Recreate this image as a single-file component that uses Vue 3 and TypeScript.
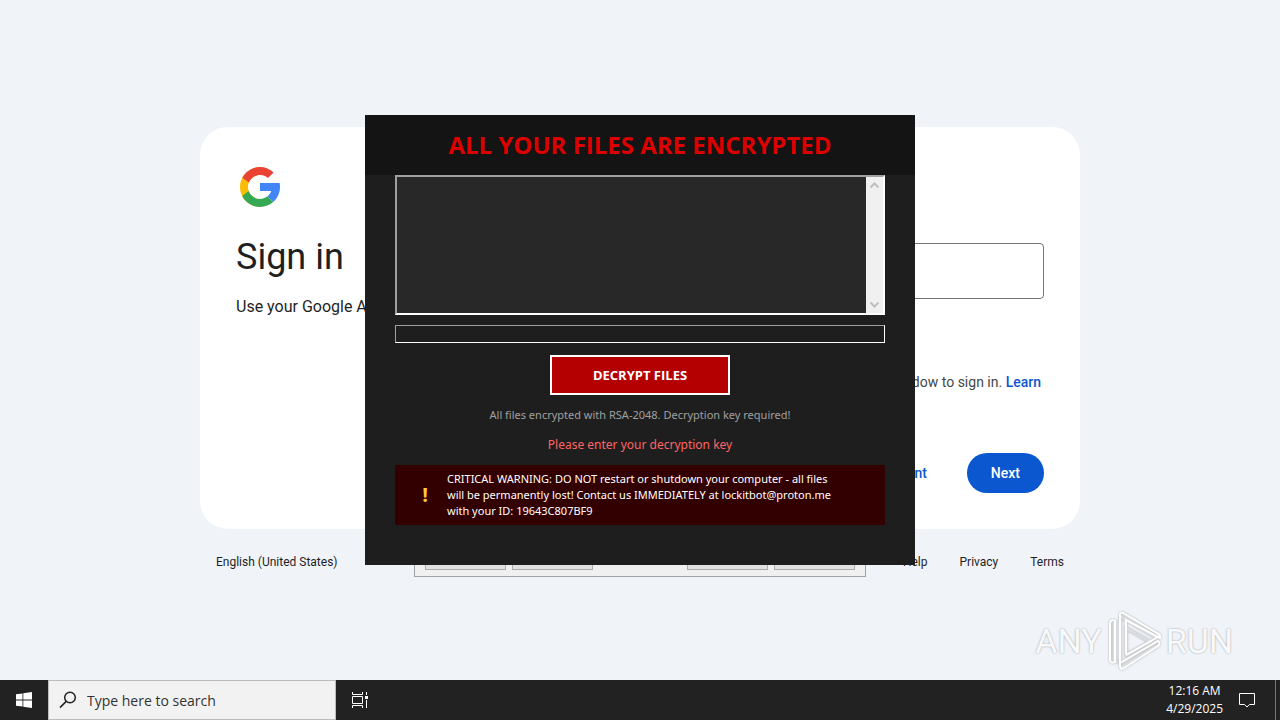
<script setup lang="ts">
import { ref } from 'vue'

const footerLinks: string[] = ['Help', 'Privacy', 'Terms']
const email = ref('')
const keyText = ref('')
const message = ref('')
const query = ref('')
</script>

<template>
  <div class="desktop">
    <main class="stage">
      <section class="signin">
        <div class="card">
          <div class="intro">
            <svg class="g-logo" viewBox="0 0 48 48" aria-hidden="true">
              <path fill="#FBBC05" d="M24 12C17.400 12 12 17.400 12 24s5.400 12 12 12v8C13 44 4 35 4 24S13 4 24 4z" />
              <path fill="#EA4335" d="M6.306 14.691l6.571 4.819C14.655 15.108 18.961 12 24 12c3.059 0 5.842 1.154 7.961 3.039l5.657-5.657C34.046 6.053 29.268 4 24 4 16.318 4 9.656 8.337 6.306 14.691z" />
              <path fill="#34A853" d="M24 44c5.166 0 9.860-1.977 13.409-5.192l-6.190-5.238C29.211 35.091 26.715 36 24 36c-5.202 0-9.619-3.317-11.283-7.946l-6.522 5.025C9.505 39.556 16.227 44 24 44z" />
              <path fill="#4285F4" d="M43.611 20H24v8h11.303c-.792 2.237-2.231 4.166-4.087 5.571l6.190 5.238C41.500 35.200 44 30 44 24c0-1.341-.138-2.650-.389-4z" />
            </svg>
            <h1>Sign in</h1>
            <p>Use your Google Account</p>
          </div>
          <form class="entry" @submit.prevent>
            <input v-model="email" class="email" type="text" aria-label="Sign in" />
            <p class="guest">Use a Private Window to sign in. <a href="#">Learn</a></p>
            <div class="actions">
              <button type="button" class="create">Create account</button>
              <button type="submit" class="next">Next</button>
            </div>
          </form>
        </div>
        <footer class="footer">
          <select class="language" aria-label="English (United States)">
            <option>English (United States)</option>
          </select>
          <nav>
            <a v-for="link in footerLinks" :key="link" href="#">{{ link }}</a>
          </nav>
        </footer>
      </section>

      <div class="back-dialog" aria-hidden="true">
        <div class="pair">
          <button type="button" tabindex="-1"></button>
          <button type="button" tabindex="-1" class="marked"></button>
        </div>
        <div class="pair">
          <button type="button" tabindex="-1" class="marked early"></button>
          <button type="button" tabindex="-1"></button>
        </div>
      </div>

      <div class="window-layer">
        <section class="window" role="dialog" aria-labelledby="window-title">
          <h2 id="window-title">ALL YOUR FILES ARE ENCRYPTED</h2>
          <div class="window-body">
            <div class="message">
              <textarea v-model="message" aria-labelledby="window-title"></textarea>
              <div class="scroll">
                <svg viewBox="0 0 17 17"><path d="M4.500 10.500l4-4 4 4" /></svg>
                <svg viewBox="0 0 17 17"><path d="M4.500 6.500l4 4 4-4" /></svg>
              </div>
            </div>
            <input v-model="keyText" class="key" type="text" aria-labelledby="key-hint" />
            <button type="button" class="decrypt">DECRYPT FILES</button>
            <p class="status">All files encrypted with RSA-2048. Decryption key required!</p>
            <p id="key-hint" class="hint">Please enter your decryption key</p>
            <div class="warning">
              <span class="bang">!</span>
              <p>
                CRITICAL WARNING: DO NOT restart or shutdown your computer - all files<br />
                will be permanently lost! Contact us IMMEDIATELY at lockitbot@proton.me<br />
                with your ID: 19643C807BF9
              </p>
            </div>
          </div>
        </section>
      </div>

      <div class="watermark">
        <span>ANY</span>
        <svg viewBox="0 0 56 62" aria-hidden="true">
          <g class="edge">
            <path d="M14 8v44M14 6.500L51 28 M20 18v27l24-13z M8 12v37q0 4 4 2M14 58l38-23" />
          </g>
          <g class="line">
            <path d="M14 42V5q0-3 3-2l34 20q4 2 3 5l-34-18v34" />
            <path d="M20 45l32-18M14 42v14q0 4 4 2l34-22q3-3 0-5L14 53" />
            <path d="M8 10q-4 0-4 4v35q0 5 5 3V10" />
          </g>
        </svg>
        <span>RUN</span>
      </div>
    </main>

    <footer class="taskbar">
      <button type="button" class="start" aria-label="Start">
        <svg width="16" height="16" viewBox="0 0 16 16">
          <path fill="#fff" d="M0 2.300L6.500 1.400v6.200H0zM7.300 1.300L16 0v7.600H7.300zM0 8.400h6.500v6.200L0 13.700zM7.300 8.400H16V16l-8.700-1.300z" />
        </svg>
      </button>
      <label class="search">
        <svg width="18" height="18" viewBox="0 0 18 18">
          <circle cx="11" cy="6.500" r="5.300" />
          <path d="M7.200 10.400L1 16.600" />
        </svg>
        <input v-model="query" type="text" placeholder="Type here to search" />
      </label>
      <button type="button" class="taskview" aria-label="Task view">
        <svg width="18" height="16" viewBox="0 0 18 16">
          <path d="M1.500 0v2.500h10V0M1.500 16v-2.500h10V16M1.500 4.500h10v7h-10zM15.500 0v3M15.500 8v8" />
          <path class="solid" d="M14 4h3v3h-3z" />
        </svg>
      </button>
      <div class="tray">
        <time class="clock">12:16 AM<br />4/29/2025</time>
        <button type="button" class="notes" aria-label="Notifications">
          <svg width="18" height="18" viewBox="0 0 18 18">
            <path d="M1.500 2.500h15v11h-5L9 16l-2.500-2.500h-5z" />
          </svg>
        </button>
        <span class="peek"></span>
      </div>
    </footer>
  </div>
</template>

<style>
body {
  margin: 0;
}
</style>

<style scoped>
* {
  box-sizing: border-box;
}

.desktop {
  display: flex;
  flex-direction: column;
  min-height: 100vh;
  background: #f0f4f9;
  font-family: "Open Sans", "Noto Sans", sans-serif;
}

h1,
h2,
p {
  margin: 0;
  font-weight: 400;
}

button,
input,
textarea,
select {
  margin: 0;
  padding: 0;
  border: 0;
  border-radius: 0;
  font: inherit;
  color: inherit;
  background: none;
  outline: none;
}

a {
  color: inherit;
  text-decoration: none;
}

.stage {
  position: relative;
  flex: 1;
  display: flex;
  flex-direction: column;
  align-items: center;
  justify-content: center;
  padding-top: 42px;
  overflow: hidden;
}

.signin {
  width: 100%;
  max-width: 880px;
  font-family: Roboto, "Liberation Sans", sans-serif;
  color: #1f1f1f;
}

.card {
  display: grid;
  grid-template-columns: 1fr 1fr;
  padding: 36px;
  border-radius: 28px;
  background: #fff;
}

.g-logo {
  display: block;
  width: 48px;
  height: 48px;
}

.intro h1 {
  margin-top: 24px;
  font-size: 36px;
  line-height: 44px;
}

.intro p {
  margin-top: 16px;
  font-size: 16px;
  line-height: 24px;
}

.entry {
  padding-top: 80px;
}

.email {
  display: block;
  width: 100%;
  height: 56px;
  padding: 0 16px;
  border: 1px solid #747775;
  border-radius: 4px;
}

.guest {
  margin-top: 73px;
  padding-right: 3px;
  font-size: 14px;
  line-height: 20px;
  text-align: right;
  color: #444746;
}

.guest a {
  font-weight: 500;
  color: #0b57d0;
}

.actions {
  display: flex;
  justify-content: flex-end;
  gap: 24px;
  margin-top: 61px;
  font-size: 14px;
  font-weight: 500;
}

.create {
  padding: 0 16px;
  color: #0b57d0;
}

.next {
  height: 40px;
  padding: 0 24px;
  border-radius: 20px;
  color: #fff;
  background: #0b57d0;
}

.footer {
  display: flex;
  justify-content: space-between;
  padding: 24px 16px;
  font-size: 12px;
  line-height: 18px;
}

.language {
  appearance: none;
}

.footer nav {
  display: flex;
  gap: 32px;
}

.back-dialog {
  position: absolute;
  bottom: 103px;
  left: 50%;
  display: flex;
  justify-content: space-between;
  width: 452px;
  padding: 6px 10px;
  border: 1px solid #a0a0a8;
  background: #f0f0f0;
  transform: translateX(-50%);
}

.pair {
  display: flex;
  gap: 6px;
}

.back-dialog button {
  display: flex;
  align-items: flex-end;
  justify-content: center;
  width: 81px;
  height: 23px;
  padding-bottom: 4px;
  border: 1px solid #adadad;
  background: #e1e1e1;
}

.marked::after {
  content: "";
  width: 3px;
  height: 2px;
  margin-left: 12px;
  background: #333;
}

.early::after {
  margin-left: 0;
  margin-right: 8px;
}

.window-layer {
  position: absolute;
  inset: 0;
  display: grid;
  place-items: center;
}

.window {
  width: 550px;
  color: #fff;
  background: #1e1e1e;
}

.window h2 {
  font-size: 24px;
  font-weight: 700;
  line-height: 60px;
  text-align: center;
  color: #dc0000;
  background: #141414;
}

.window-body {
  display: flex;
  flex-direction: column;
  align-items: center;
  padding: 0 30px 40px;
}

.message {
  display: flex;
  width: 100%;
  height: 140px;
  border: 2px solid;
  border-color: #a0a0a0 #fff #fff #a0a0a0;
  background: #282828;
}

.message textarea {
  flex: 1;
  resize: none;
}

.scroll {
  display: flex;
  flex-direction: column;
  justify-content: space-between;
  width: 17px;
  background: #f0f0f0;
}

.scroll svg {
  width: 17px;
  height: 17px;
  fill: none;
  stroke: #bfbfbf;
  stroke-width: 2;
}

.key {
  width: 100%;
  height: 18px;
  margin-top: 10px;
  border: 1px solid;
  border-color: #a0a0a0 #fff #fff #a0a0a0;
}

.decrypt {
  width: 180px;
  height: 40px;
  margin-top: 12px;
  border: 2px solid #fff;
  font-size: 13px;
  font-weight: 700;
  background: #b40000;
}

.status,
.hint,
.warning p {
  font-family: "Noto Sans", "Open Sans", sans-serif;
}

.status {
  margin-top: 10px;
  font-size: 11px;
  line-height: 20px;
  color: #a0a0a0;
}

.hint {
  margin-top: 10px;
  font-size: 12px;
  line-height: 20px;
  color: #ff6464;
}

.warning {
  display: flex;
  align-items: center;
  width: 100%;
  margin-top: 10px;
  padding: 6px 0;
  background: #320000;
}

.bang {
  width: 60px;
  margin-right: -8px;
  font-size: 20px;
  font-weight: 700;
  line-height: 24px;
  text-align: center;
  color: #ffc83d;
}

.warning p {
  font-size: 11px;
  line-height: 16px;
  white-space: nowrap;
}

.watermark {
  position: absolute;
  right: 47px;
  bottom: 8px;
  display: flex;
  align-items: center;
  gap: 4px;
  font-family: Roboto, sans-serif;
  font-size: 34px;
  line-height: 62px;
  color: #f8f9fb;
  text-shadow: 0 0 2px #999;
}

.watermark svg {
  width: 56px;
  height: 62px;
  fill: none;
  filter: drop-shadow(0 0 1px #aaa);
}

.edge {
  stroke: #d9dce0;
  stroke-width: 3;
}

.line {
  stroke: #fff;
  stroke-width: 2;
}

.taskbar {
  display: flex;
  height: 40px;
  color: #fff;
  background: #222;
}

.start,
.taskview {
  display: grid;
  place-items: center;
  width: 48px;
}

.search {
  display: flex;
  align-items: center;
  gap: 10px;
  width: 288px;
  padding: 0 10px;
  border: 1px solid #bbb;
  color: #222;
  background: #f2f2f2;
}

.search svg {
  fill: none;
  stroke: #222;
  stroke-width: 1.5;
}

.search input {
  flex: 1;
  min-width: 0;
  font-size: 14px;
}

.search input::placeholder {
  color: #333;
  opacity: 1;
}

.taskview svg,
.notes svg {
  fill: none;
  stroke: #fff;
  stroke-width: 1;
}

.taskview .solid {
  fill: #fff;
  stroke: none;
}

.tray {
  display: flex;
  align-items: center;
  margin-left: auto;
}

.clock {
  font-size: 12px;
  line-height: 18px;
  text-align: center;
}

.notes {
  display: grid;
  place-items: center;
  width: 48px;
  height: 40px;
  margin-right: 4px;
}

.peek {
  width: 5px;
  height: 40px;
  border-left: 1px solid #777;
}
</style>
